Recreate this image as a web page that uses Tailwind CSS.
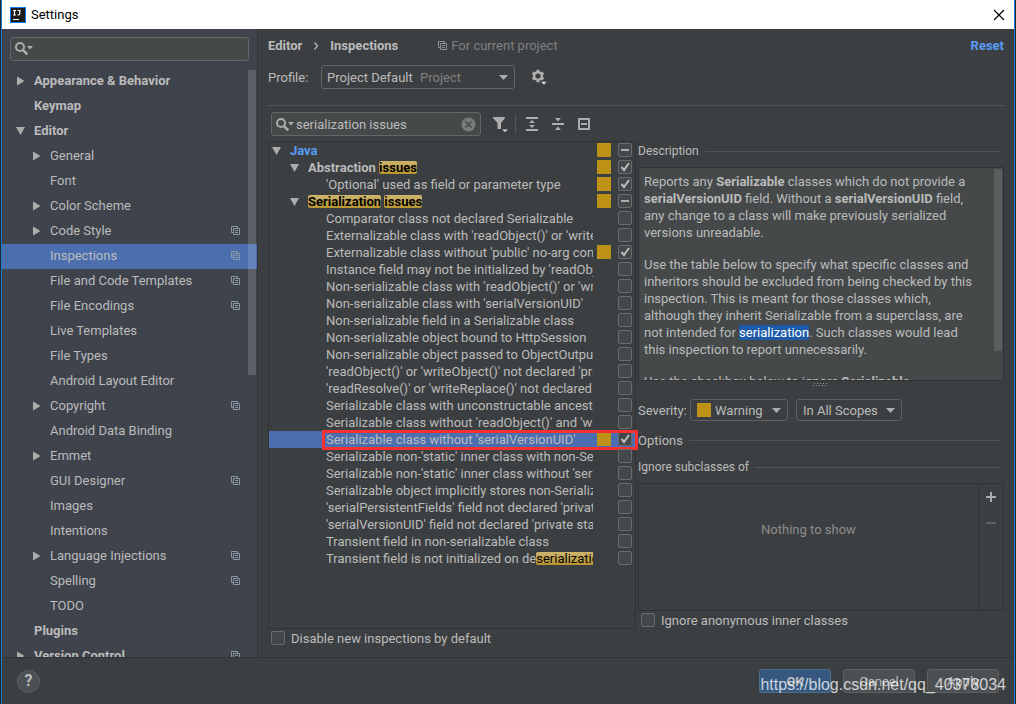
<!DOCTYPE html>
<html lang="en">
<head>
<meta charset="utf-8">
<title>Settings</title>
<script src="https://cdn.jsdelivr.net/npm/@tailwindcss/browser@4"></script>
</head>
<body class="h-screen overflow-hidden bg-[#24262a] px-px font-['Roboto',sans-serif] text-[13px] leading-[17px] text-[#bbbbbb]">
<svg class="hidden" aria-hidden="true">
  <symbol id="right" viewBox="0 0 9 10"><path d="M1 0.5V9.5L8.5 5Z" fill="#adadad"/></symbol>
  <symbol id="down" viewBox="0 0 9 10"><path d="M0 1H9L4.5 9Z" fill="#adadad"/></symbol>
  <symbol id="copy" viewBox="0 0 9 9"><path d="M2 6.5H0.5V0.5H6.5V2M2.5 2.5H8.5V8.5H2.5ZM4 4.5H7M4 6.5H7" fill="none" stroke="currentColor"/></symbol>
  <symbol id="lens" viewBox="0 0 18 13"><circle cx="5" cy="5" r="4" fill="none" stroke="#adadad" stroke-width="2"/><path d="M7.8 7.8L12.3 12.3" stroke="#adadad" stroke-width="2.6"/><path d="M12 4H18L15 7.5Z" fill="#adadad"/></symbol>
  <symbol id="check" viewBox="0 0 14 14"><path d="M3.5 7L6 10L11 3" fill="none" stroke="#bdbdbd" stroke-width="2"/></symbol>
  <symbol id="dash" viewBox="0 0 14 14"><path d="M3 7H11" stroke="#adadad" stroke-width="2"/></symbol>
  <symbol id="caret" viewBox="0 0 9 5"><path d="M0 0H9L4.5 5Z" fill="#adadad"/></symbol>
</svg>
<div class="flex h-full flex-col border-x border-l-[#1a7fd0] border-r-[#1a7fd8] bg-[#3c3f41]">
  <header class="flex h-[29px] shrink-0 items-center bg-white pr-[9px] pl-2 text-black">
    <svg class="mr-[5px] size-4" viewBox="0 0 16 16"><rect width="16" height="16" fill="#087cfa"/><rect x="1" y="1" width="14" height="14" fill="#1c1c1c"/><path d="M3 3.500H6M4.500 3.500V8M3 8H6M7.500 3.500H10.500M9.800 3.500V6.500Q9.800 8 8.500 8H7.500" fill="none" stroke="#fff" stroke-width="1.200"/><path d="M3 12.500H9" stroke="#fff" stroke-width="1"/></svg>
    <h1 class="flex-1">Settings</h1>
    <button aria-label="Close" class="flex"><svg class="size-3" viewBox="0 0 12 12"><path d="M1 1L11 11M11 1L1 11" stroke="#000" stroke-width="1.200"/></svg></button>
  </header>

  <div class="flex min-h-0 flex-1">
    <nav aria-label="Settings" class="flex w-64 shrink-0 flex-col border-r border-[#313335] bg-[#3f434c]">
      <div class="relative mt-2 mr-2 ml-2 flex">
        <input aria-label="Search settings" class="h-6 w-full rounded-[3px] border border-[#636667] bg-[#45494a] pl-8 outline-none">
        <svg class="absolute top-[5px] left-[5px] h-[13px] w-[18px]"><use href="#lens"/></svg>
      </div>
      <div class="relative mt-2 min-h-0 flex-1 overflow-hidden">
        <ul id="nav"></ul>
        <div class="absolute top-px right-px h-[305px] w-2 bg-white/15"></div>
      </div>
    </nav>

    <main class="flex min-w-0 flex-1 flex-col pr-[10px] pl-[10px]">
      <div class="mt-2 flex h-[17px] items-center font-bold">
        <span>Editor</span>
        <svg class="mx-[11px] h-2 w-1.5" viewBox="0 0 6 8"><path d="M1.500 0.500L4.500 4L1.500 7.500" fill="none" stroke="#bbb" stroke-width="1.200"/></svg>
        <span>Inspections</span>
        <svg class="mr-1 ml-10 size-[9px] text-[#8a9299]"><use href="#copy"/></svg>
        <span class="flex-1 font-normal text-[#808080]">For current project</span>
        <a href="#reset" class="text-[#589df6]">Reset</a>
      </div>
      <div class="mt-[11px] flex h-6 items-center">
        <label for="profile" class="w-[53px]">Profile:</label>
        <div class="grid w-[194px] items-center">
          <select id="profile" class="col-start-1 row-start-1 h-6 appearance-none rounded-[3px] border border-[#646667] bg-[#3c3f41] px-[5px] outline-none"><option>Project Default</option></select>
          <span class="pointer-events-none col-start-1 row-start-1 flex items-center justify-between pr-[7px] pl-[99px] text-[#808080]">Project<svg class="h-[5px] w-[9px]"><use href="#caret"/></svg></span>
        </div>
        <button aria-label="Profile actions" class="ml-4"><svg class="size-4" viewBox="0 0 16 16"><circle cx="7" cy="7" r="3.800" fill="none" stroke="#adadad" stroke-width="2.400"/><path d="M7 0.800V3M7 11V13.200M1.600 3.900L3.500 5M10.500 9L12.400 10.100M1.600 10.100L3.500 9M10.500 5L12.400 3.900" stroke="#adadad" stroke-width="3"/><path d="M9.500 12.500H16L13 16Z" fill="#ddd" stroke="#3c3f41" stroke-width=".5"/></svg></button>
      </div>
      <hr class="mt-4 border-[#515456]">
      <div class="mt-1.5 ml-[3px] flex h-6 items-center">
        <div class="relative flex w-[210px] items-center">
          <input aria-label="Filter inspections" value="serialization issues" class="h-6 w-full rounded-[3px] border border-[#646667] bg-[#45494a] pl-6 outline-none">
          <svg class="absolute left-[5px] h-[13px] w-[18px]"><use href="#lens"/></svg>
          <button aria-label="Clear filter" class="absolute right-[5px]"><svg class="size-[15px]" viewBox="0 0 15 15"><circle cx="7.500" cy="7.500" r="7" fill="#787a7b"/><path d="M4.500 4.500L10.500 10.500M10.500 4.500L4.500 10.500" stroke="#45494a" stroke-width="1.500"/></svg></button>
        </div>
        <button aria-label="Filter" class="ml-3"><svg class="size-[15px]" viewBox="0 0 15 15"><path d="M0 0H12V1L8 6V12H4.500V6L0 1Z" fill="#adadad"/><path d="M9 12.500H15L12 15Z" fill="#ddd"/></svg></button>
        <span class="mx-[7px] h-5 w-px bg-[#555759]"></span>
        <button aria-label="Expand all" class="ml-[3px]"><svg class="h-[14px] w-3" viewBox="0 0 12 14"><path d="M0 1H12M0 13H12" stroke="#adadad" stroke-width="2"/><path d="M6 3L9 6H3ZM6 11L9 8H3Z" fill="#adadad"/></svg></button>
        <button aria-label="Collapse all" class="ml-[14px]"><svg class="h-[14px] w-3" viewBox="0 0 12 14"><path d="M0 7H12" stroke="#adadad" stroke-width="2"/><path d="M6 4.500L9 1H3ZM6 9.500L9 13H3Z" fill="#adadad"/></svg></button>
        <button aria-label="Reset to empty" class="ml-[14px]"><svg class="size-3" viewBox="0 0 12 12"><rect x="1" y="1" width="10" height="10" fill="none" stroke="#adadad" stroke-width="2"/><path d="M3 6H9" stroke="#adadad" stroke-width="2"/></svg></button>
      </div>

      <div class="mt-[5px] flex min-h-0 flex-1 gap-[2px]">
        <section class="flex w-[368px] shrink-0 flex-col">
          <ul id="tree" class="flex-1 border border-[#323232]"></ul>
          <label class="mt-px mb-[11px] ml-[3px] flex h-4 items-center gap-[6px]"><input type="checkbox" class="size-[14px] appearance-none rounded-[2px] border border-[#6b6b6b] bg-[#43494a]">Disable new inspections by default</label>
        </section>

        <section class="flex min-w-0 flex-1 flex-col">
          <h2 class="mt-[2px] flex items-center gap-[6px] pr-[3px] text-[12px]">Description<span class="h-px flex-1 bg-[#515456]"></span></h2>
          <div class="relative mt-[7px] h-[214px] shrink-0 overflow-hidden border border-[#323232] bg-[#45494a] pt-[5px] pl-[5px] whitespace-nowrap">
            <p>Reports any <b>Serializable</b> classes which do not provide a<br><b>serialVersionUID</b> field. Without a <b>serialVersionUID</b> field,<br>any change to a class will make previously serialized<br>versions unreadable.</p>
            <p class="mt-[15px]">Use the table below to specify what specific classes and<br>inheritors should be excluded from being checked by this<br>inspection. This is meant for those classes which,<br>although they inherit Serializable from a superclass, are<br>not intended for <mark class="bg-[#1d5ba8] text-white">serialization</mark>. Such classes would lead<br>this inspection to report unnecessarily.</p>
            <p class="mt-[15px]">Use the checkbox below to ignore <b>Serializable</b></p>
            <div class="absolute top-px right-px h-[182px] w-2 bg-[#5c5f60]"></div>
          </div>
          <svg class="mt-px h-1 w-4 shrink-0 self-center" viewBox="0 0 16 4"><path d="M1 1.500H16M0 3.500H15" stroke="#999" stroke-dasharray="1 2"/></svg>
          <div class="mt-[13px] flex items-center">
            <label for="severity" class="w-[52px]">Severity:</label>
            <div class="grid w-[98px] items-center">
              <select id="severity" class="col-start-1 row-start-1 h-[22px] appearance-none rounded-[3px] border border-[#5e6060] bg-[#3c3f41] pl-6 outline-none"><option>Warning</option></select>
              <span class="pointer-events-none col-start-1 row-start-1 flex items-center justify-between pr-[7px] pl-[7px]"><span class="size-[14px] bg-[#be9117]"></span><svg class="h-[5px] w-[9px]"><use href="#caret"/></svg></span>
            </div>
            <div class="ml-2 grid w-[106px] items-center">
              <select aria-label="Scope" class="col-start-1 row-start-1 h-[22px] appearance-none rounded-[3px] border border-[#5e6060] bg-[#3c3f41] pl-[6px] outline-none"><option>In All Scopes</option></select>
              <svg class="pointer-events-none col-start-1 row-start-1 mr-[7px] h-[5px] w-[9px] justify-self-end"><use href="#caret"/></svg>
            </div>
          </div>
          <h2 class="mt-[11px] flex items-center gap-[6px] pr-[3px]">Options<span class="h-px flex-1 bg-[#515456]"></span></h2>
          <h3 class="mt-[10px] flex items-center gap-[6px] pr-[3px] text-[12px]">Ignore subclasses of<span class="h-px flex-1 bg-[#515456]"></span></h3>
          <div class="mt-[7px] flex flex-1 border border-[#323232]">
            <p class="flex-1 pt-[37px] text-center text-[#8c8c8c]">Nothing to show</p>
            <div class="flex w-[25px] flex-col items-center gap-4 border-l border-[#323232] pt-2">
              <button aria-label="Add" class="flex"><svg class="size-[10px]" viewBox="0 0 10 10"><path d="M0 5H10M5 0V10" stroke="#adadad" stroke-width="2"/></svg></button>
              <button aria-label="Remove" disabled class="flex"><svg class="size-[10px]" viewBox="0 0 10 10"><path d="M0 5H10" stroke="#606263" stroke-width="2"/></svg></button>
            </div>
          </div>
          <label class="mt-px mb-[29px] ml-[3px] flex h-4 items-center gap-[6px]"><input type="checkbox" class="size-[14px] appearance-none rounded-[2px] border border-[#6b6b6b] bg-[#43494a]">Ignore anonymous inner classes</label>
        </section>
      </div>
    </main>
  </div>

  <footer class="relative flex h-[47px] shrink-0 items-center gap-3 border-t border-[#313335] pr-[15px] pl-[15px]">
    <button aria-label="Help" class="mr-auto size-[23px] rounded-full border border-[#5e6060] bg-[#4c5052] text-[16px] leading-[20px] font-bold">?</button>
    <button class="h-6 w-[72px] rounded-[3px] border border-[#4c708c] bg-[#365880] font-bold">OK</button>
    <button class="h-6 w-[72px] rounded-[3px] border border-[#5e6060] bg-[#4c5052]">Cancel</button>
    <button class="h-6 w-[72px] rounded-[3px] border border-[#5e6060] bg-[#4c5052]">Apply</button>
    <span class="pointer-events-none absolute right-2 bottom-[10px] font-['Liberation_Sans',sans-serif] text-[16px] leading-[18px] text-white/75">https://blog.csdn.net/qq_40378034</span>
  </footer>
</div>

<script>
// Navigation entries: [label, level, arrow, has project-scope icon]
const nav = [
  ["Appearance &amp; Behavior", 0, "right"], ["Keymap", 0], ["Editor", 0, "down"],
  ["General", 1, "right"], ["Font", 1], ["Color Scheme", 1, "right"], ["Code Style", 1, "right", 1],
  ["Inspections", 1, "", 1], ["File and Code Templates", 1, "", 1], ["File Encodings", 1, "", 1],
  ["Live Templates", 1], ["File Types", 1], ["Android Layout Editor", 1], ["Copyright", 1, "right", 1],
  ["Android Data Binding", 1], ["Emmet", 1, "right"], ["GUI Designer", 1, "", 1], ["Images", 1],
  ["Intentions", 1], ["Language Injections", 1, "right", 1], ["Spelling", 1, "", 1], ["TODO", 1],
  ["Plugins", 0], ["Version Control", 0, "right", 1]
];
document.getElementById("nav").innerHTML = nav.map(([t, lv, arrow, copy]) => `
  <li class="flex h-[25px] items-center pb-[2px] pr-[17px] ${lv ? "pl-[30px]" : "pl-[14px] font-bold"} ${t === "Inspections" ? "bg-[#4b6eaf]" : ""}">
    <svg class="mr-[9px] h-[10px] w-[9px]">${arrow ? `<use href="#${arrow}"/>` : ""}</svg>
    <span class="flex-1">${t}</span>
    ${copy ? '<svg class="size-[9px] text-[#8a97a3]"><use href="#copy"/></svg>' : ""}
  </li>`).join("");

// Inspection rows: [html, level, has severity swatch, state]
const hl = s => `<mark class="inline-block rounded-[2px] bg-linear-to-b from-[#cdb46c] to-[#b8942f] leading-[13px] text-black">${s}</mark>`;
const rows = [
  ["Java", 0, 1, "dash"], ["Abstraction " + hl("issues"), 1, 1, "check"],
  ["'Optional' used as field or parameter type", 2, 1, "check"],
  [hl("Serialization") + " " + hl("issues"), 1, 1, "dash"],
  ["Comparator class not declared Serializable", 2],
  ["Externalizable class with 'readObject()' or 'writeObject()'", 2],
  ["Externalizable class without 'public' no-arg constructor", 2, 1, "check"],
  ["Instance field may not be initialized by 'readObject()'", 2],
  ["Non-serializable class with 'readObject()' or 'writeObject()'", 2],
  ["Non-serializable class with 'serialVersionUID'", 2],
  ["Non-serializable field in a Serializable class", 2],
  ["Non-serializable object bound to HttpSession", 2],
  ["Non-serializable object passed to ObjectOutputStream", 2],
  ["'readObject()' or 'writeObject()' not declared 'private'", 2],
  ["'readResolve()' or 'writeReplace()' not declared 'protected'", 2],
  ["Serializable class with unconstructable ancestor", 2],
  ["Serializable class without 'readObject()' and 'writeObject()'", 2],
  ["Serializable class without 'serialVersionUID'", 2, 1, "check", 1],
  ["Serializable non-'static' inner class with non-Serializable outer", 2],
  ["Serializable non-'static' inner class without 'serialVersionUID'", 2],
  ["Serializable object implicitly stores non-Serializable object", 2],
  ["'serialPersistentFields' field not declared 'private'", 2],
  ["'serialVersionUID' field not declared 'private static final'", 2],
  ["Transient field in non-serializable class", 2],
  ["Transient field is not initialized on de" + hl("serialization"), 2]
];
const pad = ["pl-[3px] font-bold text-[#589df6]", "pl-[21px] font-bold", "pl-[39px]"];
document.getElementById("tree").innerHTML = rows.map(([t, lv, sw, st, sel], i) => `
  <li class="relative flex h-[17px] items-center pr-[3px] ${pad[lv]} ${sel ? "bg-[#4b6eaf]" : ""}">
    <svg class="mr-[9px] h-[10px] w-[9px] shrink-0">${lv < 2 ? '<use href="#down"/>' : ""}</svg>
    <label for="r${i}" class="min-w-0 flex-1 overflow-hidden whitespace-nowrap">${t}</label>
    <span class="mt-px ml-1 size-[14px] shrink-0 self-start ${sw ? "bg-[#be9117]" : ""}"></span>
    <span class="mt-px ml-[7px] grid size-[14px] shrink-0 self-start">
      <input id="r${i}" type="checkbox" ${st === "check" ? "checked" : ""} class="col-start-1 row-start-1 size-[14px] appearance-none rounded-[2px] border border-[#6b6b6b] bg-[#43494a]">
      ${st ? `<svg class="pointer-events-none col-start-1 row-start-1 size-[14px]"><use href="#${st}"/></svg>` : ""}
    </span>
    ${sel ? '<span class="pointer-events-none absolute -top-px -right-[3px] -bottom-[2px] left-[53px] border-3 border-[#f73131]"></span>' : ""}
  </li>`).join("");
document.querySelectorAll("#r0, #r3").forEach(c => { c.indeterminate = true; });
</script>
</body>
</html>
